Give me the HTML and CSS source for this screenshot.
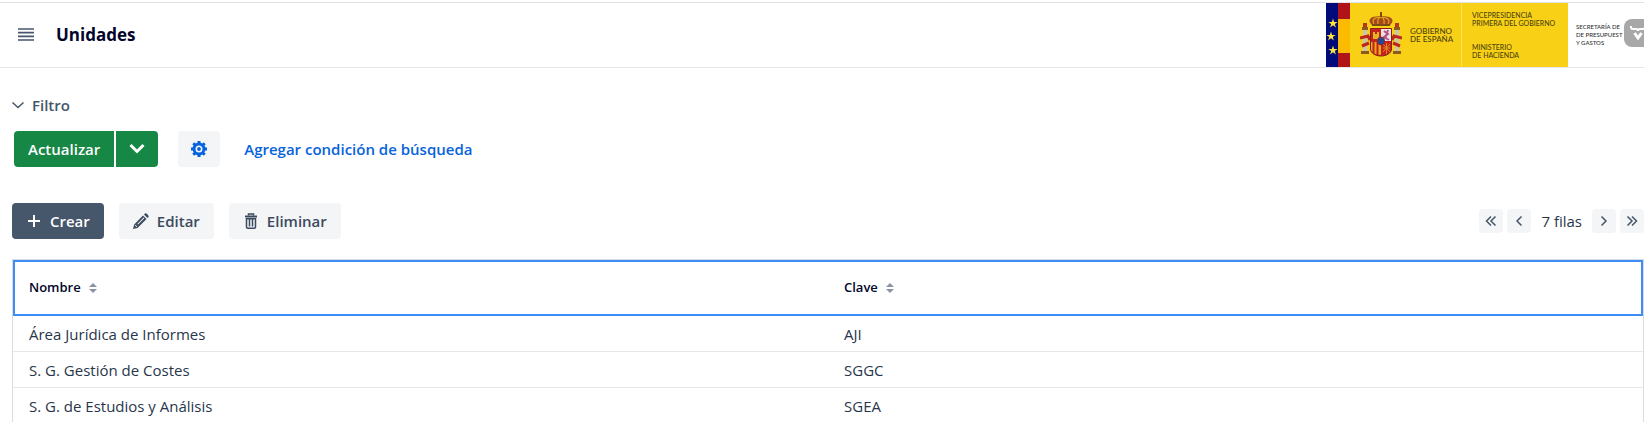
FILE: index.html
```html
<!DOCTYPE html>
<html lang="es">
<head>
    <meta charset="UTF-8">
    <meta name="viewport" content="width=device-width, initial-scale=1.0">
    <title>Unidades</title>
    <link rel="stylesheet" href="styles.css">
</head>
<body>
    <header class="navbar">
        <button type="button" class="menu-toggle" aria-label="Menú">
            <svg width="16" height="14" viewBox="0 0 16 14" fill="none" stroke="currentColor" stroke-width="1.700">
                <path d="M0 1h16M0 4.700h16M0 8.400h16M0 12h16"/>
            </svg>
        </button>
        <h1 class="title">Unidades</h1>
        <div class="logo">
            <svg class="flags" width="24" height="64" viewBox="0 0 24 64">
                <path fill="#000a78" d="M0 0h12v64H0z"/>
                <path fill="#b01419" d="M12 0h12v64H12z"/>
                <path fill="#fdbb00" d="M12 16h12v34H12z"/>
                <g fill="#fbe53c">
                    <path id="star" d="M7 15.500l1.100 3.400h3.600l-2.900 2.100 1.100 3.400L7 22.300l-2.900 2.100 1.100-3.400-2.900-2.100h3.600z"/>
                    <use href="#star" x="-2" y="13"/>
                    <use href="#star" x="0" y="27"/>
                </g>
            </svg>
            <svg class="shield" width="42" height="46" viewBox="0 0 42 46">
                <!-- corona -->
                <path fill="#a8461c" d="M13 14C6 8 10 4 21 4s15 4 8 10z"/>
                <path fill="none" stroke="#d9a21b" stroke-width="1.300" d="M14 12c-3-5 2-7 7-7s10 2 7 7M18 12c-1-4 1-7 3-7s4 3 3 7"/>
                <path fill="#7d4a17" d="M20 0h2v5h-2zM12 12h18v2H12z"/>
                <!-- columnas -->
                <path fill="#c9c5b4" d="M3 18h4v21H3zM35 18h4v21h-4z"/>
                <path fill="#8c5a1c" d="M2 15h6v3H2zM34 15h6v3h-6zM1 39h8v3H1zM33 39h8v3h-8z"/>
                <path fill="none" stroke="#bd2719" stroke-width="3" d="M0 26l8-2 2 4M2 34l7-3M42 26l-8-2-2 4M40 34l-7-3"/>
                <path fill="#b5371b" d="M3 11h4v4H3zM35 11h4v4h-4z"/>
                <!-- escudo -->
                <path fill="#c3221d" stroke="#8f1d17" d="M10.500 16.500h21V37c0 4-5 7-10.500 7s-10.500-3-10.500-7z"/>
                <path fill="#eee3e3" d="M21 17h10v12H21z"/>
                <path fill="none" stroke="#b55389" stroke-width="2" d="M24 19l4 3-4 3 5 3M28 18l-3 9"/>
                <path fill="#e3b524" d="M13 20h2v2h2v-2h2v7h-6z"/>
                <path fill="#e8a91c" d="M11 30h10v13c-6-.500-10-3-10-6z"/>
                <path stroke="#c3221d" stroke-width="2" d="M13.500 30v11M17.500 30v13"/>
                <path fill="none" stroke="#dc8a1b" d="M23 32l7 8M30 32l-7 8M23 36h7M26.500 31v11"/>
                <ellipse cx="21" cy="29" rx="3.500" ry="4" fill="#1f4d91" stroke="#8c2331"/>
            </svg>
            <p class="logo-country">GOBIERNO<br>DE ESPAÑA</p>
            <div class="logo-ministry">
                <p>VICEPRESIDENCIA<br>PRIMERA DEL GOBIERNO</p>
                <p>MINISTERIO<br>DE HACIENDA</p>
            </div>
            <p class="logo-office">SECRETARÍA DE<br>DE PRESUPUEST<br>Y GASTOS</p>
            <button type="button" class="badge" aria-label="Herramientas">
                <svg width="30" height="28" viewBox="0 0 30 28" fill="none" stroke="#fff">
                    <path stroke-width="2" d="M7 7v1q0 2 2 2h3q2 0 2 2 0-2 2-2h3q2 0 2-2V7"/>
                    <path stroke-width="3" d="M10.500 14l3.500 5 3.500-5"/>
                </svg>
            </button>
        </div>
    </header>

    <main class="content">
        <section>
            <button type="button" class="filter-toggle">
                <svg width="12" height="12" viewBox="0 0 12 12" fill="none" stroke="currentColor" stroke-width="1.500">
                    <path d="M.500 3.500L6 8.500l5.500-5"/>
                </svg>
                Filtro
            </button>
            <div class="filter-actions">
                <div class="split">
                    <button type="button" class="btn btn-success">Actualizar</button>
                    <button type="button" class="btn btn-success btn-icon" aria-label="Más opciones">
                        <svg width="16" height="16" viewBox="0 0 16 16" fill="none" stroke="currentColor" stroke-width="3">
                            <path d="M1.500 4L8 10.500 14.500 4"/>
                        </svg>
                    </button>
                </div>
                <button type="button" class="btn btn-icon btn-settings" aria-label="Configurar">
                    <svg width="16" height="16" viewBox="0 0 16 16" fill="none" stroke="currentColor">
                        <path stroke-width="3" d="M8 0v3M8 13v3M0 8h3M13 8h3M2.300 2.300l2 2M11.700 11.700l2 2M2.300 13.700l2-2M11.700 4.300l2-2"/>
                        <circle cx="8" cy="8" r="5" stroke-width="3"/>
                        <circle cx="8" cy="8" r="1.900" fill="currentColor" stroke="none"/>
                    </svg>
                </button>
                <button type="button" class="btn btn-link">Agregar condición de búsqueda</button>
            </div>
        </section>

        <section class="toolbar">
            <button type="button" class="btn btn-primary">
                <svg width="16" height="16" viewBox="0 0 16 16" stroke="currentColor" stroke-width="2">
                    <path d="M8 2v12M2 8h12"/>
                </svg>
                Crear
            </button>
            <button type="button" class="btn">
                <svg width="16" height="16" viewBox="0 0 16 16" fill="currentColor">
                    <path fill-rule="evenodd" d="M0 16l1.200-4.500L10 2.500l3.500 3.500-9 9zM2 12.500l1.500 1.500.7-.4-1.800-1.800zM4.300 10.900l.7.7 6.300-6.300-.7-.7z"/>
                    <path d="M11 1.500l1-1c1-1 4.500 2.500 3.500 3.500l-1 1z"/>
                </svg>
                Editar
            </button>
            <button type="button" class="btn">
                <svg width="16" height="16" viewBox="0 0 16 16" fill="none" stroke="currentColor">
                    <path stroke-width="1.500" d="M5.500 2.500V1h5v1.500"/>
                    <path stroke-width="2" d="M2 3.500h12"/>
                    <path stroke-width="1.500" d="M3.500 5.700V14q0 1.200 1.200 1.200h6.600q1.200 0 1.200-1.200V5.700zM6.500 6v7.500M9.500 6v7.500"/>
                </svg>
                Eliminar
            </button>
            <nav class="pager">
                <button type="button" class="page-btn" aria-label="Primera página">
                    <svg width="12" height="12" viewBox="0 0 12 12" fill="none" stroke="currentColor" stroke-width="1.500"><path d="M6 1.500L1.500 6 6 10.500M10.500 1.500L6 6l4.500 4.500"/></svg>
                </button>
                <button type="button" class="page-btn" aria-label="Página anterior">
                    <svg width="12" height="12" viewBox="0 0 12 12" fill="none" stroke="currentColor" stroke-width="1.500"><path d="M8.500 1.500L4 6l4.500 4.500"/></svg>
                </button>
                <span class="row-count">7 filas</span>
                <button type="button" class="page-btn" aria-label="Página siguiente">
                    <svg width="12" height="12" viewBox="0 0 12 12" fill="none" stroke="currentColor" stroke-width="1.500"><path d="M3.500 1.500L8 6l-4.500 4.500"/></svg>
                </button>
                <button type="button" class="page-btn" aria-label="Última página">
                    <svg width="12" height="12" viewBox="0 0 12 12" fill="none" stroke="currentColor" stroke-width="1.500"><path d="M1.500 1.500L6 6l-4.500 4.500M6 1.500L10.500 6 6 10.500"/></svg>
                </button>
            </nav>
        </section>

        <table class="grid">
            <thead>
                <tr>
                    <th>Nombre
                        <svg width="8" height="12" viewBox="0 0 8 12" fill="#8993a3"><path d="M4 1l4 4H0zM4 11l4-4H0z"/></svg>
                    </th>
                    <th>Clave
                        <svg width="8" height="12" viewBox="0 0 8 12" fill="#8993a3"><path d="M4 1l4 4H0zM4 11l4-4H0z"/></svg>
                    </th>
                </tr>
            </thead>
            <tbody>
                <tr>
                    <td>Área Jurídica de Informes</td>
                    <td>AJI</td>
                </tr>
                <tr>
                    <td>S. G. Gestión de Costes</td>
                    <td>SGGC</td>
                </tr>
                <tr>
                    <td>S. G. de Estudios y Análisis</td>
                    <td>SGEA</td>
                </tr>
            </tbody>
        </table>
    </main>
</body>
</html>
```
FILE: styles.css
```css
* {
    box-sizing: border-box;
}

body {
    margin: 0;
    padding-top: 2px;
    background-color: #fff;
    color: #28364b;
    font-family: 'Segoe UI', 'Open Sans', sans-serif;
    font-size: 15px;
    line-height: 20px;
    overflow: hidden;
}

p {
    margin: 0;
}

svg {
    display: block;
    flex-shrink: 0;
}

button {
    border: none;
    padding: 0;
    background: none;
    color: inherit;
    font: inherit;
    cursor: pointer;
}

.navbar {
    display: flex;
    align-items: center;
    border-top: 1px solid #dfe1e4;
    border-bottom: 1px solid #e6e7ea;
}

.menu-toggle {
    padding: 10px 18px;
    color: #46566b;
}

.title {
    margin: 0 auto 0 4px;
    color: #02042b;
    font-size: 17px;
    line-height: 24px;
    font-weight: 700;
}

.logo {
    position: relative;
    display: flex;
    align-items: center;
    width: 318px;
    height: 64px;
    background: linear-gradient(to right, #f8d117 242px, #fff 242px);
    color: #4d430f;
    font-family: Lato, sans-serif;
    font-size: 7px;
    line-height: 8px;
    font-weight: 500;
    white-space: nowrap;
}

.shield {
    margin-left: 10px;
}

.logo-country {
    width: 51px;
    margin-left: 8px;
    font-size: 8px;
}

.logo-ministry {
    display: flex;
    flex-direction: column;
    justify-content: center;
    gap: 16px;
    height: 64px;
    width: 107px;
    padding-left: 10px;
    border-left: 1px solid #fae15b;
}

.logo-office {
    margin-left: 8px;
    color: #333;
    font-size: 6px;
}

.badge {
    position: absolute;
    top: 16px;
    right: -10px;
    border-radius: 8px;
    background-color: #a8a8a8;
}

.content {
    padding-left: 12px;
}

.filter-toggle {
    display: flex;
    align-items: center;
    gap: 8px;
    margin-top: 27px;
    color: #46566b;
    font-weight: 600;
}

.filter-actions {
    display: flex;
    align-items: center;
    gap: 20px;
    margin: 16px 2px 36px;
}

.split {
    display: flex;
    gap: 2px;
}

.btn {
    display: flex;
    align-items: center;
    justify-content: center;
    gap: 8px;
    height: 36px;
    padding: 0 14px;
    border-radius: 4px;
    background-color: #f3f5f7;
    color: #3c4a5e;
    font-weight: 600;
}

.btn-icon {
    width: 42px;
    padding: 0;
}

.btn-success {
    background-color: #168744;
    color: #fff;
}

.split .btn:first-child {
    border-radius: 4px 0 0 4px;
}

.split .btn:last-child {
    border-radius: 0 4px 4px 0;
}

.btn-settings {
    color: #0763dc;
}

.btn-link {
    padding: 0 4px;
    background: none;
    color: #0763dc;
}

.btn-primary {
    background-color: #46566b;
    color: #fff;
}

.toolbar {
    display: flex;
    align-items: center;
    gap: 15px;
    margin-bottom: 20px;
}

.pager {
    display: flex;
    align-items: center;
    gap: 4px;
    margin-left: auto;
}

.page-btn {
    display: flex;
    align-items: center;
    justify-content: center;
    width: 24px;
    height: 24px;
    border-radius: 4px;
    background-color: #f3f5f7;
    color: #46566b;
}

.row-count {
    padding: 0 6px;
}

.grid {
    width: 100%;
    border: 1px solid #d9dce0;
    border-spacing: 0;
    table-layout: fixed;
}

.grid thead {
    outline: 2px solid #3c8df5;
    outline-offset: -2px;
}

.grid th {
    height: 56px;
    padding: 0 16px 2px;
    color: #02042b;
    font-size: 13px;
    font-weight: 600;
    text-align: left;
}

.grid th svg {
    display: inline-block;
    margin-left: 5px;
    vertical-align: -2px;
}

.grid td {
    height: 36px;
    padding: 0 16px;
    border-bottom: 1px solid #e6e7ea;
}
```
